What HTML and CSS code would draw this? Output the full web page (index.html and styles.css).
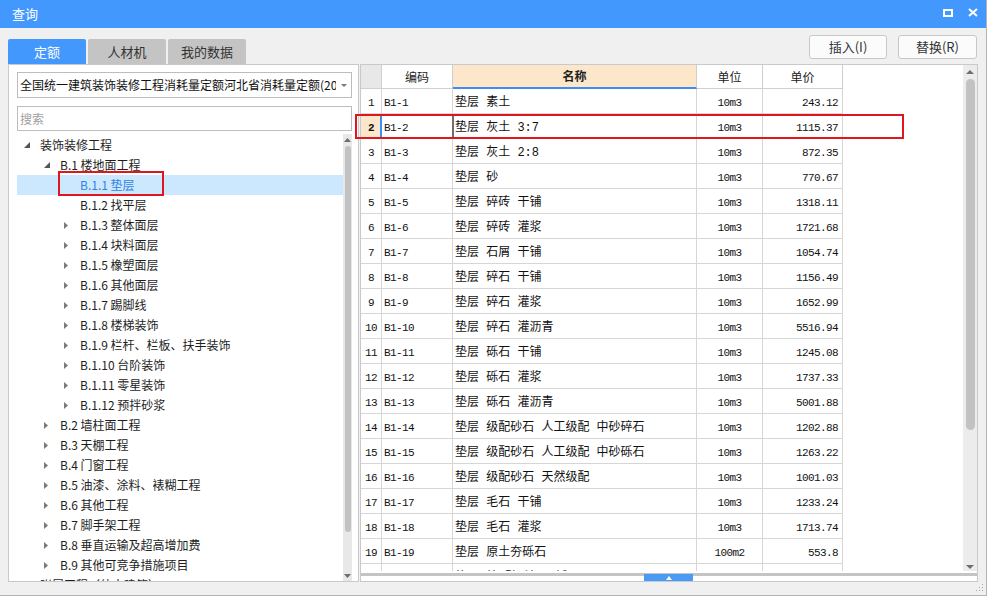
FILE: index.html
```html
<!DOCTYPE html>
<html lang="zh-CN">
<head>
<meta charset="utf-8">
<title>查询</title>
<link rel="stylesheet" href="styles.css">
</head>
<body>
<div class="window">
  <div class="titlebar">
    <span class="title">查询</span>
    <div class="win-btns">
      <svg width="10" height="8" viewBox="0 0 10 8"><rect x="1" y="1" width="8" height="6" fill="none" stroke="#fff" stroke-width="2"/></svg>
      <svg width="10" height="9" viewBox="0 0 10 9"><path d="M1 1 L9 8 M9 1 L1 8" stroke="#fff" stroke-width="2" fill="none"/></svg>
    </div>
  </div>

  <div class="toolbar">
    <div class="tabs">
      <div class="tab active">定额</div>
      <div class="tab">人材机</div>
      <div class="tab">我的数据</div>
    </div>
    <div class="actions">
      <div class="btn">插入(I)</div>
      <div class="btn btn-r">替换(R)</div>
    </div>
  </div>

  <div class="main">
    <div class="left">
      <div class="combo">
        <span class="combo-text">全国统一建筑装饰装修工程消耗量定额河北省消耗量定额(2013)</span>
        <span class="combo-arrow"><svg width="6" height="3" viewBox="0 0 6 3"><path d="M0 0 H6 L3 3 Z" fill="#7a7a7a"/></svg></span>
      </div>
      <div class="search">搜索</div>
      <div class="tree">
        <div class="tree-list">
          <div class="node l0"><span class="tw"><svg width="6" height="6" viewBox="0 0 6 6"><path d="M6 0 L6 6 L0 6 Z" fill="#555"/></svg></span><span>装饰装修工程</span></div>
          <div class="node l1"><span class="tw"><svg width="6" height="6" viewBox="0 0 6 6"><path d="M6 0 L6 6 L0 6 Z" fill="#555"/></svg></span><span>B.1 楼地面工程</span></div>
          <div class="node l2 sel"><span class="tw"></span><span>B.1.1 垫层</span></div>
          <div class="node l2"><span class="tw"></span><span>B.1.2 找平层</span></div>
          <div class="node l2"><span class="tw"><svg width="4" height="7" viewBox="0 0 4 7"><path d="M0 0 L4 3.5 L0 7 Z" fill="#7a7a7a"/></svg></span><span>B.1.3 整体面层</span></div>
          <div class="node l2"><span class="tw"><svg width="4" height="7" viewBox="0 0 4 7"><path d="M0 0 L4 3.5 L0 7 Z" fill="#7a7a7a"/></svg></span><span>B.1.4 块料面层</span></div>
          <div class="node l2"><span class="tw"><svg width="4" height="7" viewBox="0 0 4 7"><path d="M0 0 L4 3.5 L0 7 Z" fill="#7a7a7a"/></svg></span><span>B.1.5 橡塑面层</span></div>
          <div class="node l2"><span class="tw"><svg width="4" height="7" viewBox="0 0 4 7"><path d="M0 0 L4 3.5 L0 7 Z" fill="#7a7a7a"/></svg></span><span>B.1.6 其他面层</span></div>
          <div class="node l2"><span class="tw"><svg width="4" height="7" viewBox="0 0 4 7"><path d="M0 0 L4 3.5 L0 7 Z" fill="#7a7a7a"/></svg></span><span>B.1.7 踢脚线</span></div>
          <div class="node l2"><span class="tw"><svg width="4" height="7" viewBox="0 0 4 7"><path d="M0 0 L4 3.5 L0 7 Z" fill="#7a7a7a"/></svg></span><span>B.1.8 楼梯装饰</span></div>
          <div class="node l2"><span class="tw"><svg width="4" height="7" viewBox="0 0 4 7"><path d="M0 0 L4 3.5 L0 7 Z" fill="#7a7a7a"/></svg></span><span>B.1.9 栏杆、栏板、扶手装饰</span></div>
          <div class="node l2"><span class="tw"><svg width="4" height="7" viewBox="0 0 4 7"><path d="M0 0 L4 3.5 L0 7 Z" fill="#7a7a7a"/></svg></span><span>B.1.10 台阶装饰</span></div>
          <div class="node l2"><span class="tw"><svg width="4" height="7" viewBox="0 0 4 7"><path d="M0 0 L4 3.5 L0 7 Z" fill="#7a7a7a"/></svg></span><span>B.1.11 零星装饰</span></div>
          <div class="node l2"><span class="tw"><svg width="4" height="7" viewBox="0 0 4 7"><path d="M0 0 L4 3.5 L0 7 Z" fill="#7a7a7a"/></svg></span><span>B.1.12 预拌砂浆</span></div>
          <div class="node l1"><span class="tw"><svg width="4" height="7" viewBox="0 0 4 7"><path d="M0 0 L4 3.5 L0 7 Z" fill="#7a7a7a"/></svg></span><span>B.2 墙柱面工程</span></div>
          <div class="node l1"><span class="tw"><svg width="4" height="7" viewBox="0 0 4 7"><path d="M0 0 L4 3.5 L0 7 Z" fill="#7a7a7a"/></svg></span><span>B.3 天棚工程</span></div>
          <div class="node l1"><span class="tw"><svg width="4" height="7" viewBox="0 0 4 7"><path d="M0 0 L4 3.5 L0 7 Z" fill="#7a7a7a"/></svg></span><span>B.4 门窗工程</span></div>
          <div class="node l1"><span class="tw"><svg width="4" height="7" viewBox="0 0 4 7"><path d="M0 0 L4 3.5 L0 7 Z" fill="#7a7a7a"/></svg></span><span>B.5 油漆、涂料、裱糊工程</span></div>
          <div class="node l1"><span class="tw"><svg width="4" height="7" viewBox="0 0 4 7"><path d="M0 0 L4 3.5 L0 7 Z" fill="#7a7a7a"/></svg></span><span>B.6 其他工程</span></div>
          <div class="node l1"><span class="tw"><svg width="4" height="7" viewBox="0 0 4 7"><path d="M0 0 L4 3.5 L0 7 Z" fill="#7a7a7a"/></svg></span><span>B.7 脚手架工程</span></div>
          <div class="node l1"><span class="tw"><svg width="4" height="7" viewBox="0 0 4 7"><path d="M0 0 L4 3.5 L0 7 Z" fill="#7a7a7a"/></svg></span><span>B.8 垂直运输及超高增加费</span></div>
          <div class="node l1"><span class="tw"><svg width="4" height="7" viewBox="0 0 4 7"><path d="M0 0 L4 3.5 L0 7 Z" fill="#7a7a7a"/></svg></span><span>B.9 其他可竞争措施项目</span></div>
          <div class="node l0"><span class="tw"><svg width="4" height="7" viewBox="0 0 4 7"><path d="M0 0 L4 3.5 L0 7 Z" fill="#7a7a7a"/></svg></span><span>附属工程（仿古建筑）</span></div>
        </div>
        <div class="sb">
          <svg class="up" width="7" height="4" viewBox="0 0 7 4"><path d="M0 4 L3.5 0 L7 4 Z" fill="#6e6e6e"/></svg>
          <div class="thumb"></div>
          <svg class="down" width="7" height="4" viewBox="0 0 7 4"><path d="M0 0 L7 0 L3.5 4 Z" fill="#6e6e6e"/></svg>
        </div>
      </div>
    </div>

    <div class="right">
      <div class="grid-area">
        <div class="grid">
          <div class="head">
            <div class="cell c-num"></div>
            <div class="cell c-code">编码</div>
            <div class="cell c-name">名称</div>
            <div class="cell c-unit">单位</div>
            <div class="cell c-price">单价</div>
          </div>
          <div class="row"><div class="cell c-num">1</div><div class="cell c-code">B1-1</div><div class="cell c-name">垫层 素土</div><div class="cell c-unit">10m3</div><div class="cell c-price">243.12</div></div>
          <div class="row sel"><div class="cell c-num">2</div><div class="cell c-code">B1-2</div><div class="cell c-name">垫层 灰土 3:7</div><div class="cell c-unit">10m3</div><div class="cell c-price">1115.37</div></div>
          <div class="row"><div class="cell c-num">3</div><div class="cell c-code">B1-3</div><div class="cell c-name">垫层 灰土 2:8</div><div class="cell c-unit">10m3</div><div class="cell c-price">872.35</div></div>
          <div class="row"><div class="cell c-num">4</div><div class="cell c-code">B1-4</div><div class="cell c-name">垫层 砂</div><div class="cell c-unit">10m3</div><div class="cell c-price">770.67</div></div>
          <div class="row"><div class="cell c-num">5</div><div class="cell c-code">B1-5</div><div class="cell c-name">垫层 碎砖 干铺</div><div class="cell c-unit">10m3</div><div class="cell c-price">1318.11</div></div>
          <div class="row"><div class="cell c-num">6</div><div class="cell c-code">B1-6</div><div class="cell c-name">垫层 碎砖 灌浆</div><div class="cell c-unit">10m3</div><div class="cell c-price">1721.68</div></div>
          <div class="row"><div class="cell c-num">7</div><div class="cell c-code">B1-7</div><div class="cell c-name">垫层 石屑 干铺</div><div class="cell c-unit">10m3</div><div class="cell c-price">1054.74</div></div>
          <div class="row"><div class="cell c-num">8</div><div class="cell c-code">B1-8</div><div class="cell c-name">垫层 碎石 干铺</div><div class="cell c-unit">10m3</div><div class="cell c-price">1156.49</div></div>
          <div class="row"><div class="cell c-num">9</div><div class="cell c-code">B1-9</div><div class="cell c-name">垫层 碎石 灌浆</div><div class="cell c-unit">10m3</div><div class="cell c-price">1652.99</div></div>
          <div class="row"><div class="cell c-num">10</div><div class="cell c-code">B1-10</div><div class="cell c-name">垫层 碎石 灌沥青</div><div class="cell c-unit">10m3</div><div class="cell c-price">5516.94</div></div>
          <div class="row"><div class="cell c-num">11</div><div class="cell c-code">B1-11</div><div class="cell c-name">垫层 砾石 干铺</div><div class="cell c-unit">10m3</div><div class="cell c-price">1245.08</div></div>
          <div class="row"><div class="cell c-num">12</div><div class="cell c-code">B1-12</div><div class="cell c-name">垫层 砾石 灌浆</div><div class="cell c-unit">10m3</div><div class="cell c-price">1737.33</div></div>
          <div class="row"><div class="cell c-num">13</div><div class="cell c-code">B1-13</div><div class="cell c-name">垫层 砾石 灌沥青</div><div class="cell c-unit">10m3</div><div class="cell c-price">5001.88</div></div>
          <div class="row"><div class="cell c-num">14</div><div class="cell c-code">B1-14</div><div class="cell c-name">垫层 级配砂石 人工级配 中砂碎石</div><div class="cell c-unit">10m3</div><div class="cell c-price">1202.88</div></div>
          <div class="row"><div class="cell c-num">15</div><div class="cell c-code">B1-15</div><div class="cell c-name">垫层 级配砂石 人工级配 中砂砾石</div><div class="cell c-unit">10m3</div><div class="cell c-price">1263.22</div></div>
          <div class="row"><div class="cell c-num">16</div><div class="cell c-code">B1-16</div><div class="cell c-name">垫层 级配砂石 天然级配</div><div class="cell c-unit">10m3</div><div class="cell c-price">1001.03</div></div>
          <div class="row"><div class="cell c-num">17</div><div class="cell c-code">B1-17</div><div class="cell c-name">垫层 毛石 干铺</div><div class="cell c-unit">10m3</div><div class="cell c-price">1233.24</div></div>
          <div class="row"><div class="cell c-num">18</div><div class="cell c-code">B1-18</div><div class="cell c-name">垫层 毛石 灌浆</div><div class="cell c-unit">10m3</div><div class="cell c-price">1713.74</div></div>
          <div class="row"><div class="cell c-num">19</div><div class="cell c-code">B1-19</div><div class="cell c-name">垫层 原土夯砾石</div><div class="cell c-unit">100m2</div><div class="cell c-price">553.8</div></div>
          <div class="row"><div class="cell c-num">20</div><div class="cell c-code">B1-20</div><div class="cell c-name">垫层 炉(矿)渣 干铺</div><div class="cell c-unit">10m3</div><div class="cell c-price">1150.20</div></div>
        </div>
        <div class="vbar">
          <svg class="up" width="8" height="4" viewBox="0 0 8 4"><path d="M0 4 L4 0 L8 4 Z" fill="#6e6e6e"/></svg>
          <div class="thumb"></div>
          <svg class="down" width="8" height="4" viewBox="0 0 8 4"><path d="M0 0 L8 0 L4 4 Z" fill="#6e6e6e"/></svg>
        </div>
      </div>
      <div class="hbar"><div class="hbar-line"></div></div>
      <div class="splitter"><svg width="6" height="4" viewBox="0 0 6 4"><path d="M0 4 L3 0 L6 4 Z" fill="#fff"/></svg></div>
    </div>
  </div>

  <div class="footer">
    <svg class="grip" width="7" height="8" viewBox="0 0 7 8">
      <rect x="6" y="0" width="1" height="1" fill="#a8a8a8"/>
      <rect x="3" y="3" width="1" height="1" fill="#a8a8a8"/>
      <rect x="6" y="3" width="1" height="1" fill="#a8a8a8"/>
      <rect x="0" y="6" width="1" height="1" fill="#a8a8a8"/>
      <rect x="3" y="6" width="1" height="1" fill="#a8a8a8"/>
      <rect x="6" y="6" width="1" height="1" fill="#a8a8a8"/>
    </svg>
  </div>

  <div class="mark mark-tree"></div>
  <div class="mark mark-row"></div>
</div>
</body>
</html>
```

FILE: styles.css
```css
* { box-sizing: border-box; }
html, body { margin: 0; padding: 0; }
body {
  width: 991px;
  height: 596px;
  overflow: hidden;
  background: #fff;
  font-family: "Noto Sans CJK SC", "Liberation Sans", sans-serif;
  color: #1b1b1b;
}

.window {
  position: relative;
  width: 987px;
  height: 596px;
  display: flex;
  flex-direction: column;
  background: #f0f0f0;
  border-right: 1px solid #b4b4b4;
  border-bottom: 1px solid #b4b4b4;
}

/* title bar */
.titlebar {
  flex: none;
  height: 28px;
  display: flex;
  align-items: center;
  padding: 0 8px 0 12px;
  background: #4298fd;
  color: #fff;
}
.title { flex: 1; font-size: 13px; line-height: 28px; }
.win-btns { display: flex; align-items: center; gap: 15px; margin-top: -3px; }
.win-btns svg { display: block; }

/* toolbar */
.toolbar {
  flex: none;
  height: 36px;
  display: flex;
  padding: 0 9px 0 8px;
}
.tabs { display: flex; gap: 2px; align-self: flex-end; }
.tab {
  width: 78px;
  height: 25px;
  line-height: 25px;
  text-align: center;
  font-size: 13px;
  color: #333;
  background: #c4c4c4;
  border-radius: 2px 2px 0 0;
}
.tab.active { background: #4298fd; color: #fff; }
.actions { margin-left: auto; display: flex; gap: 11px; padding-top: 7px; }
.btn {
  width: 78px;
  height: 24px;
  line-height: 22px;
  text-align: center;
  font-size: 13px;
  color: #333;
  background: #fbfbfb;
  border: 1px solid #c8c8c8;
  border-radius: 3px;
}
.btn-r { width: 79px; }

/* main */
.main { flex: none; height: 518px; display: flex; padding-left: 8px; }

.left {
  flex: none;
  width: 351px;
  display: flex;
  flex-direction: column;
  background: #fff;
  border: 1px solid #c9c9c9;
  padding: 7px 6px 0 8px;
}
.combo {
  flex: none;
  height: 26px;
  display: flex;
  align-items: center;
  border: 1px solid #bdbdbd;
  padding-left: 2px;
}
.combo-text {
  flex: 1;
  overflow: hidden;
  white-space: nowrap;
  font-size: 12px;
  line-height: 24px;
  color: #111;
}
.combo-arrow { flex: none; width: 15px; display: flex; justify-content: center; }
.combo-arrow svg { display: block; }
.search {
  flex: none;
  margin-top: 8px;
  height: 25px;
  border: 1px solid #bdbdbd;
  padding-left: 2px;
  font-size: 12px;
  line-height: 23px;
  color: #a0a0a0;
}
.tree { flex: 1; min-height: 0; margin-top: 3px; display: flex; }
.tree-list { flex: 1; overflow: hidden; padding-top: 1px; }
.node {
  height: 20px;
  display: flex;
  align-items: center;
  font-size: 12px;
  line-height: 20px;
  white-space: nowrap;
  color: #1e1e1e;
}
.node.l0 { padding-left: 3px; }
.node.l1 { padding-left: 23px; }
.node.l2 { padding-left: 43px; }
.tw { flex: none; width: 20px; height: 20px; display: flex; align-items: center; padding-left: 4px; }
.tw svg { display: block; }
.node.sel { background: #cce8ff; color: #2f83e4; }

.sb {
  flex: none;
  width: 9px;
  background: #e8e8e8;
  display: flex;
  flex-direction: column;
  align-items: center;
}
.sb svg { display: block; flex: none; }
.sb .up { margin-top: 4px; }
.sb .thumb { flex: none; margin-top: 4px; width: 6px; height: 386px; border-radius: 3px; background: #c2c2c2; }
.sb .down { margin-top: auto; margin-bottom: 3px; }

/* grid panel */
.right {
  flex: none;
  width: 618px;
  margin-left: 1px;
  position: relative;
  display: flex;
  flex-direction: column;
  background: #fff;
  border: 1px solid #c9c9c9;
}
.grid-area { flex: 1; min-height: 0; display: flex; }
.grid { flex: 1; overflow: hidden; }
.head, .row { display: flex; }
.cell {
  flex: none;
  overflow: hidden;
  white-space: nowrap;
  border-right: 1px solid #d6d6d6;
  border-bottom: 1px solid #d6d6d6;
}
.c-num { width: 21px; }
.c-code { width: 71px; }
.c-name { width: 244px; }
.c-unit { width: 66px; }
.c-price { width: 80px; }

.head .cell {
  height: 24px;
  line-height: 23px;
  text-align: center;
  font-size: 12px;
  color: #222;
  border-color: #cfcfcf;
}
.head .c-num { background: #e8e8e8; }
.head .c-name {
  background: #fde7ca;
  font-weight: bold;
  border-bottom: 2px solid #3d8ef0;
  line-height: 22px;
}

.row .cell { height: 25px; padding-top: 5px; line-height: 18px; color: #111; }
.row .c-num, .row .c-code, .row .c-unit, .row .c-price {
  font-family: "Liberation Mono", monospace;
  font-size: 11px;
  letter-spacing: -0.6px;
}
.row .c-num { text-align: center; }
.row .c-code { padding-left: 2px; }
.row .c-name {
  padding-left: 2px;
  font-family: "Liberation Mono", "Noto Sans CJK SC", monospace;
  font-size: 12px;
}
.row .c-unit { text-align: center; }
.row .c-price { text-align: right; padding-right: 4px; }

.row.sel .c-num {
  background: #fde7ca;
  font-weight: bold;
  border-right-color: #3d8ef0;
  box-shadow: inset -1px 0 #3d8ef0;
}
.row.sel .c-code { border-right-color: #6e6e6e; }
.row.sel .c-name { box-shadow: inset 1px 0 #6e6e6e; }

.vbar {
  flex: none;
  width: 14px;
  background: #ececec;
  display: flex;
  flex-direction: column;
  align-items: center;
}
.vbar svg { display: block; flex: none; }
.vbar .up { margin-top: 5px; }
.vbar .thumb { flex: none; margin-top: 5px; width: 9px; height: 351px; border-radius: 5px; background: #c2c2c2; }
.vbar .down { margin-top: auto; margin-bottom: 2px; }

.hbar { flex: none; height: 10px; padding-top: 2px; }
.hbar-line { height: 3px; background: #c4c4c4; }
.splitter {
  position: absolute;
  left: 283px;
  bottom: 0;
  width: 49px;
  height: 7px;
  background: #4a9af6;
  display: flex;
  justify-content: center;
  align-items: center;
}
.splitter svg { display: block; }

/* footer */
.footer { flex: 1; position: relative; }
.grip { position: absolute; right: 3px; bottom: 3px; display: block; }

/* red annotation boxes */
.mark { position: absolute; border: 2px solid #e0161f; pointer-events: none; }
.mark-tree { left: 58px; top: 171px; width: 106px; height: 25px; }
.mark-row { left: 355px; top: 114px; width: 549px; height: 25px; }
```
